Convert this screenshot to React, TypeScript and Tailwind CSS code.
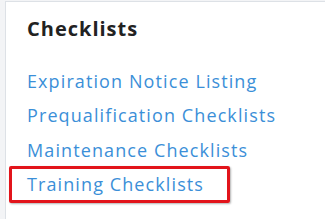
import React from "react";

export default function App() {
  const links = [
    "Expiration Notice Listing",
    "Prequalification Checklists",
    "Maintenance Checklists",
  ];
  return (
    <div className="w-[325px] h-[219px] bg-[#f3f4f6] pl-[5px] pt-[1px] overflow-hidden" style={{ fontFamily: '"Open Sans", sans-serif' }}>
      <div className="w-[340px] h-[240px] bg-white border-l border-t border-[#dde1e6] pl-[21px] pt-[15.2px]">
        <h2 className="text-[20px] font-bold text-[#222222] leading-[24px] tracking-[1px]">Checklists</h2>
        <ul className="mt-[27.8px] flex flex-col">
          {links.map((l) => (
            <li key={l} className="h-[34.5px] text-[18px] leading-[24px] tracking-[1.1px] text-[#3b8fd8]">{l}</li>
          ))}
          <li className="-ml-[18px] mt-[-6.5px] w-[221px] h-[37px] border-[3px] border-[#e2141b] rounded-[2px] shadow-[1px_1px_2px_rgba(0,0,0,0.3)] pl-[15px] pt-[3px] text-[18px] leading-[24px] tracking-[1.1px] text-[#3b8fd8]">Training Checklists</li>
        </ul>
      </div>
    </div>
  );
}
